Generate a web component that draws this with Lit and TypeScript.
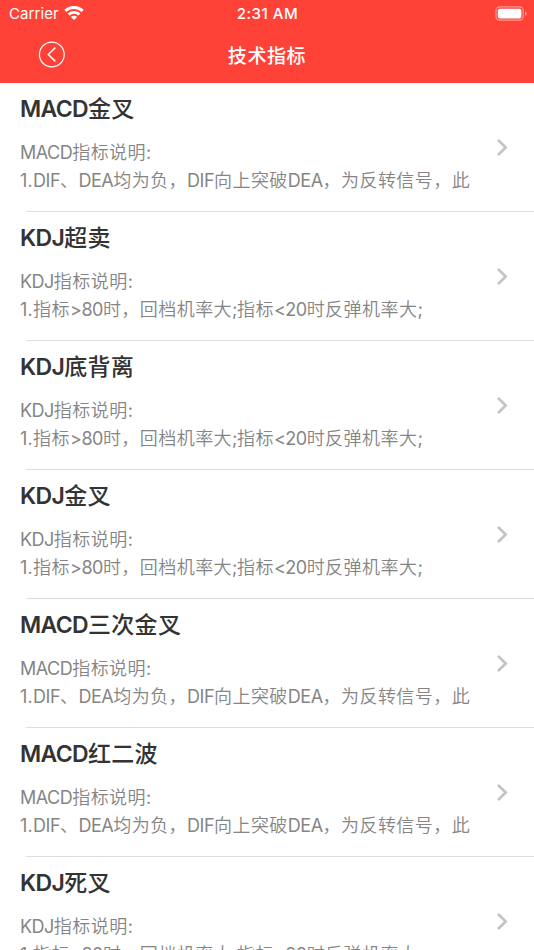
import { LitElement, html, css } from "lit";
import { customElement, property } from "lit/decorators.js";

const MACD = ["MACD指标说明:", "1.DIF、DEA均为负，DIF向上突破DEA，为反转信号，此"];
const KDJ = ["KDJ指标说明:", "1.指标>80时，回档机率大;指标<20时反弹机率大;"];

const ITEMS = [
  { name: "MACD金叉", lines: MACD },
  { name: "KDJ超卖", lines: KDJ },
  { name: "KDJ底背离", lines: KDJ },
  { name: "KDJ金叉", lines: KDJ },
  { name: "MACD三次金叉", lines: MACD },
  { name: "MACD红二波", lines: MACD },
  { name: "KDJ死叉", lines: KDJ },
];

const kind = (t: string) => (/^\d\.$/.test(t) ? "latin marker" : t.charCodeAt(0) < 128 ? "latin" : "han");

// Splits mixed text so list markers, Chinese and Latin runs can be tracked separately.
const runs = (text: string) =>
  (text.match(/\d\.|[\x00-\x7f]+|[^\x00-\x7f]+/g) ?? []).map((t) => html`<span class=${kind(t)}>${t}</span>`);

@customElement("status-bar")
class StatusBar extends LitElement {
  static styles = css`
    :host {
      display: grid;
      grid-template-columns: 1fr auto 1fr;
      align-items: center;
      height: 27px;
      padding: 0 7px 0 9px;
      color: #fff;
      font: 400 15px/27px Inter, sans-serif;
    }
    .left { display: flex; align-items: center; gap: 5px; letter-spacing: 0.1px; }
    .time { font-weight: 500; font-size: 15px; letter-spacing: 0.55px; margin-right: 1px; }
    .battery { justify-self: end; }
    svg { display: block; }
  `;
  render() {
    return html`
      <div class="left">
        <span>Carrier</span>
        <svg width="20" height="15" viewBox="0 0 20 15" fill="#fff">
          <path d="M10 0c3.800 0 7.200 1.400 9.700 3.800l-2 2.100A11 11 0 0 0 10 2.900c-3 0-5.600 1.100-7.700 3L.3 3.800A13.800 13.800 0 0 1 10 0z"/>
          <path d="M10 4.900c2.500 0 4.700.9 6.400 2.500l-2 2.100A6.400 6.400 0 0 0 10 7.800a6.400 6.400 0 0 0-4.400 1.700L3.600 7.400A9.200 9.200 0 0 1 10 4.900z"/>
          <path d="M10 9.800c1.200 0 2.300.4 3.100 1.100L10 14.100l-3.100-3.200c.8-.7 1.900-1.100 3.100-1.100z"/>
        </svg>
      </div>
      <span class="time">2:31 AM</span>
      <svg class="battery" width="32" height="15" viewBox="0 0 32 15">
        <rect x="1" y=".9" width="27.200" height="13.300" rx="3.600" fill="none" stroke="#fff" stroke-opacity=".45" stroke-width="1.200"/>
        <rect x="2.800" y="2.700" width="23.600" height="9.700" rx="2" fill="#fff"/>
        <path d="M30 5.200c1 .4 1.700 1.300 1.700 2.300S31 9.400 30 9.800z" fill="#fff" fill-opacity=".5"/>
      </svg>
    `;
  }
}

@customElement("indicator-row")
class IndicatorRow extends LitElement {
  @property({ attribute: false }) item = ITEMS[0];
  static styles = css`
    :host {
      display: grid;
      grid-template-columns: 1fr auto;
      height: 129px;
      box-sizing: border-box;
      padding: 10px 26px 0 20px;
      align-items: start;
      font-family: Inter, "Noto Sans CJK SC", sans-serif;
      background: linear-gradient(#dedede, #dedede) 26px 100% / 100% 1px no-repeat;
      white-space: nowrap;
    }
    .name { font-size: 23px; line-height: 32px; font-weight: 500; color: #333; margin-bottom: 14px; }
    .name .latin { font-weight: 600; letter-spacing: -0.65px; }
    .name .han { font-weight: 500; letter-spacing: 0.3px; }
    .line { font-size: 18px; line-height: 28px; font-weight: 400; color: #858585; }
    .line .latin { font-weight: 400; letter-spacing: -0.5px; }
    .line .marker { letter-spacing: 0.3px; }
    .line .han { font-weight: 350; letter-spacing: 0.45px; }
    svg { display: block; margin-top: 46px; }
  `;
  render() {
    return html`
      <div>
        <div class="name">${runs(this.item.name)}</div>
        ${this.item.lines.map((l) => html`<div class="line">${runs(l)}</div>`)}
      </div>
      <svg width="11" height="17" viewBox="0 0 11 17" fill="none" stroke="#c4c4c6" stroke-width="2.700">
        <path d="M1.800 1.700 8.700 8.500 1.800 15.300" stroke-linecap="round"/>
      </svg>
    `;
  }
}

@customElement("app-root")
class AppRoot extends LitElement {
  static styles = css`
    :host { display: block; height: 950px; overflow: hidden; background: #fff; }
    header { background: #ff4238; height: 83px; }
    nav {
      display: grid;
      grid-template-columns: 1fr auto 1fr;
      align-items: center;
      height: 56px;
      padding: 0 38px;
      color: #fff;
    }
    h1 {
      margin: 0;
      font: 500 19px/28px "Noto Sans CJK SC", sans-serif;
      letter-spacing: 0.6px;
    }
    svg { display: block; }
  `;
  render() {
    return html`
      <header>
        <status-bar></status-bar>
        <nav>
          <svg width="28" height="28" viewBox="0 0 28 28" fill="none" stroke="#fff">
            <circle cx="13.800" cy="13.500" r="12.400" stroke-width="1.200"/>
            <path d="M17.300 6.600 10.300 13.500 17.300 20.400" stroke-width="1.500"/>
          </svg>
          <h1>技术指标</h1>
        </nav>
      </header>
      <main>${ITEMS.map((i) => html`<indicator-row .item=${i}></indicator-row>`)}</main>
    `;
  }
}
